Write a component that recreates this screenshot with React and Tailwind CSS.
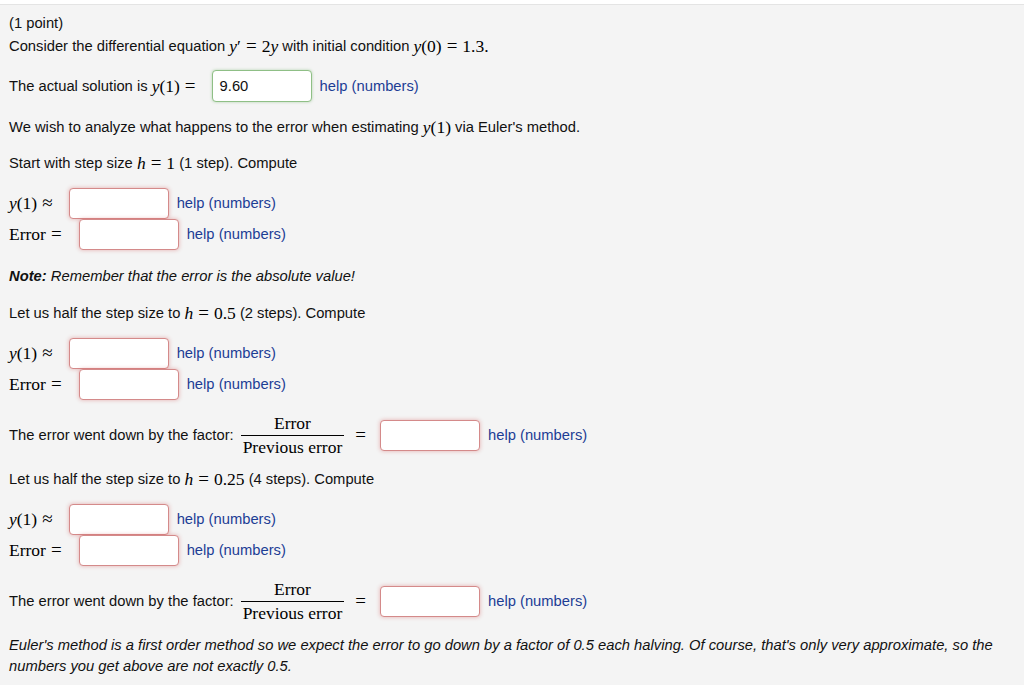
import React from "react";

const sans = { fontFamily: '"Liberation Sans", Arial, sans-serif' };
const serif = { fontFamily: '"Liberation Serif", "Times New Roman", serif' };

function M({ children }) {
  return (
    <span className="text-[17.5px] text-black" style={serif}>
      {children}
    </span>
  );
}
function I({ children }) {
  return <span className="italic">{children}</span>;
}
function Eq({ children = "=" }) {
  return <span className="mx-[5px] text-[19px] leading-none">{children}</span>;
}

function Help() {
  return <span className="ml-2 text-[14.75px] text-[#1d3d94]">help (numbers)</span>;
}

function RedInput({ ml }) {
  return (
    <div
      className={`${ml} w-[100px] h-[31px] bg-white rounded-[4px] border border-[#d48a8a] shadow-[0_0_4px_rgba(210,90,90,0.45)]`}
    />
  );
}

function AnswerRow({ label, ml, mt = "" }) {
  return (
    <div className={`flex items-center h-[31px] ${mt}`}>
      {label}
      <RedInput ml={ml} />
      <Help />
    </div>
  );
}

function YRow({ mt }) {
  return (
    <AnswerRow
      mt={mt}
      ml="ml-[11px]"
      label={
        <M>
          <I>y</I>(1)
          <Eq>≈</Eq>
        </M>
      }
    />
  );
}
function ErrRow() {
  return (
    <AnswerRow
      ml="ml-[12px]"
      label={
        <M>
          Error<Eq />
        </M>
      }
    />
  );
}

function FactorRow({ mt }) {
  return (
    <div className={`flex items-center h-[40px] ${mt}`}>
      <span>The error went down by the factor:</span>
      <span className="ml-[7px] inline-flex flex-col items-center text-[17.5px] leading-[23px] text-black" style={serif}>
        <span className="px-[2px]">Error</span>
        <span className="block w-full h-px bg-black" />
        <span className="px-[2px]">Previous error</span>
      </span>
      <span className="ml-[11px] text-[19px] text-black" style={serif}>=</span>
      <RedInput ml="ml-[14px]" />
      <Help />
    </div>
  );
}

function Line({ children, mt = "", h = "h-[20px]" }) {
  return <div className={`flex items-center ${h} ${mt} whitespace-nowrap`}>{children}</div>;
}

export default function App() {
  return (
    <div className="w-[1024px] h-[685px] bg-white overflow-hidden" style={sans}>
      <div className="h-[4px] bg-white" />
      <div className="h-[681px] bg-[#f4f4f4] border-t border-[#e4e4e4] pl-[9px] pt-[8px] text-[14.75px] text-[#111]">
        <Line>(1 point)</Line>
        <Line mt="mt-[3px]">
          Consider the differential equation&nbsp;
          <M>
            <I>y</I>′<Eq />2<I>y</I>
          </M>
          &nbsp;with initial condition&nbsp;
          <M>
            <I>y</I>(0)<Eq />1.3.
          </M>
        </Line>
        <div className="flex items-center h-[32px] mt-[14px]">
          <span>The actual solution is&nbsp;</span>
          <M>
            <I>y</I>(1)<Eq />
          </M>
          <div className="ml-[11px] w-[100px] h-[32px] bg-white rounded-[4px] border border-[#8fbf86] shadow-[0_0_3px_rgba(100,170,90,0.45)] flex items-center pl-[7px]">
            9.60
          </div>
          <Help />
        </div>
        <Line mt="mt-[15px]">
          We wish to analyze what happens to the error when estimating&nbsp;
          <M>
            <I>y</I>(1)
          </M>
          &nbsp;via Euler's method.
        </Line>
        <Line mt="mt-[16px]">
          Start with step size&nbsp;
          <M>
            <I>h</I>
            <Eq />1
          </M>
          &nbsp;(1 step). Compute
        </Line>
        <YRow mt="mt-[15px]" />
        <ErrRow />
        <Line mt="mt-[16px]">
          <span className="font-bold italic">Note:</span>
          <span className="italic">&nbsp;Remember that the error is the absolute value!</span>
        </Line>
        <Line mt="mt-[17px]">
          Let us half the step size to&nbsp;
          <M>
            <I>h</I>
            <Eq />0.5
          </M>
          &nbsp;(2 steps). Compute
        </Line>
        <YRow mt="mt-[15px]" />
        <ErrRow />
        <FactorRow mt="mt-[15px]" />
        <Line mt="mt-[14px]">
          Let us half the step size to&nbsp;
          <M>
            <I>h</I>
            <Eq />0.25
          </M>
          &nbsp;(4 steps). Compute
        </Line>
        <YRow mt="mt-[15px]" />
        <ErrRow />
        <FactorRow mt="mt-[15px]" />
        <div className="mt-[14px] italic leading-[21px] pr-[20px]">
          Euler's method is a first order method so we expect the error to go down by a factor of 0.5 each halving. Of course, that's only very approximate, so the numbers you get above are not exactly 0.5.
        </div>
      </div>
    </div>
  );
}
